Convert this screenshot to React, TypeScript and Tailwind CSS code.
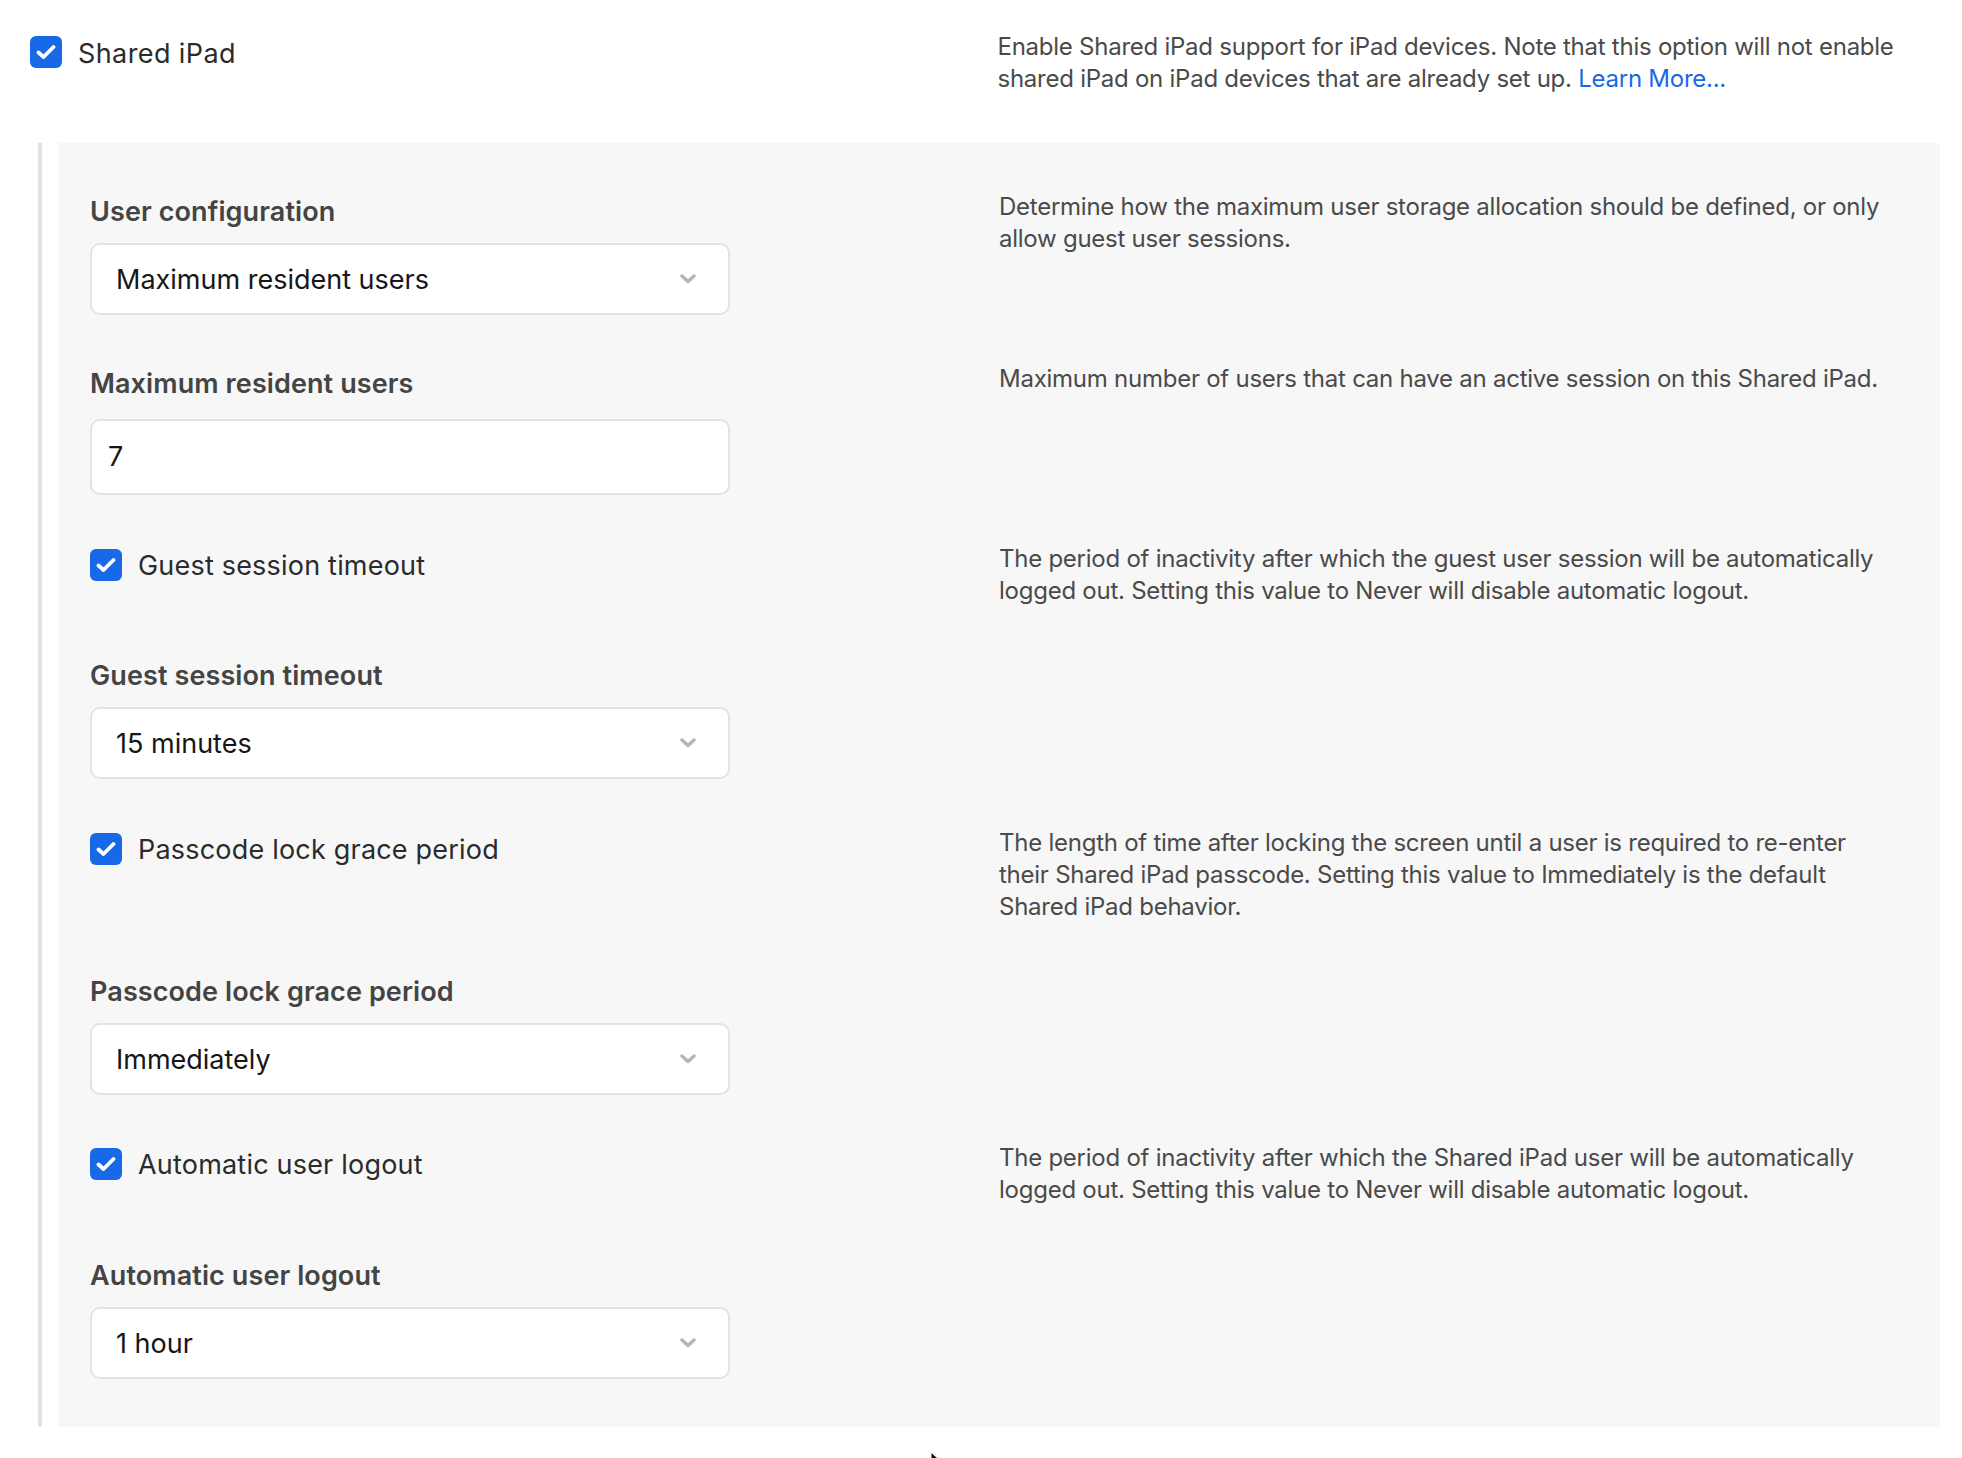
import type { ReactNode } from "react";

const font = "font-['Inter',sans-serif]";

function Checkbox() {
    return (
        <span className="flex h-8 w-8 shrink-0 items-center justify-center rounded-[6px] bg-[#1769e8]">
            <svg className="h-4 w-5" viewBox="0 0 20 16" fill="none">
                <path d="M2.5 8.5 L7.5 13 L17.5 3" stroke="#fff" strokeWidth="3.8" strokeLinecap="round" strokeLinejoin="round" />
            </svg>
        </span>
    );
}

function Chevron() {
    return (
        <svg className="h-[10px] w-4 shrink-0" viewBox="0 0 16 10" fill="none">
            <path d="M2 2 L8 7.5 L14 2" stroke="#b4b4b4" strokeWidth="3.4" strokeLinecap="round" strokeLinejoin="round" />
        </svg>
    );
}

function Desc({ children, className = "" }: { children?: ReactNode; className?: string }) {
    return <p className={`text-[24px] leading-[32px] tracking-[-0.25px] text-[#4a4a4a] ${className}`}>{children}</p>;
}

function Label({ children }: { children: ReactNode }) {
    return <div className="text-[27px] leading-[34px] font-semibold tracking-[0.1px] text-[#444444]">{children}</div>;
}

function SelectBox({ value }: { value: string }) {
    return (
        <div className="flex h-[72px] w-[640px] items-center justify-between rounded-[10px] border-2 border-[#e3e3e3] bg-white pr-[32px] pl-6">
            <span className="pt-[2px] text-[27px] text-[#161616]">{value}</span>
            <Chevron />
        </div>
    );
}

function CheckRow({ label, desc, className }: { label: string; desc: ReactNode; className: string }) {
    return (
        <div className={`grid grid-cols-[909px_1fr] ${className}`}>
            <div className="flex items-center gap-4 self-start pt-1.5">
                <Checkbox />
                <span className="pt-[2px] text-[27px] leading-[30px] tracking-[0.2px] text-[#2b2b2b]">{label}</span>
            </div>
            <Desc>{desc}</Desc>
        </div>
    );
}

function SelectField({ label, value, className }: { label: string; value: string; className: string }) {
    return (
        <div className={className}>
            <Label>{label}</Label>
            <div className="mt-[14px]">
                <SelectBox value={value} />
            </div>
        </div>
    );
}

export default function App() {
    return (
        <div className={`relative h-[1458px] w-full overflow-hidden bg-white ${font}`}>
            <div className="flex pt-[31px] pr-[44px] pl-[30px]">
                <div className="flex w-[967.5px] shrink-0 items-center gap-4 self-start pt-[5px]">
                    <Checkbox />
                    <span className="pt-[3px] text-[27px] leading-[29px] tracking-[0.4px] text-[#2b2b2b]">Shared iPad</span>
                </div>
                <Desc>
                    Enable Shared iPad support for iPad devices. Note that this option will not enable shared iPad on iPad devices that are already set up.{" "}
                    <span className="text-[#1769e8]">Learn More...</span>
                </Desc>
            </div>

            <div className="mt-[48px] mr-[22px] ml-[38px] flex h-[1284px]">
                <div className="w-1 shrink-0 bg-[#e3e3e3]" />
                <div className="ml-4 flex-1 bg-[#f7f7f7] pt-12 pr-[40px] pl-8">
                    <div className="grid grid-cols-[909px_1fr]">
                        <div className="pt-1">
                            <Label>User configuration</Label>
                            <div className="mt-[14px]">
                                <SelectBox value="Maximum resident users" />
                            </div>
                        </div>
                        <Desc>Determine how the maximum user storage allocation should be defined, or only allow guest user sessions.</Desc>
                    </div>

                    <div className="mt-[48px] grid grid-cols-[909px_1fr]">
                        <div className="pt-1">
                            <Label>Maximum resident users</Label>
                            <div className="mt-[18px] flex h-[76px] w-[640px] items-center rounded-[10px] border-2 border-[#e3e3e3] bg-white pl-4 text-[27px] text-[#161616]">
                                7
                            </div>
                        </div>
                        <Desc>Maximum number of users that can have an active session on this Shared iPad.</Desc>
                    </div>

                    <CheckRow
                        className="mt-[48px]"
                        label="Guest session timeout"
                        desc="The period of inactivity after which the guest user session will be automatically logged out. Setting this value to Never will disable automatic logout."
                    />
                    <SelectField className="mt-[52px]" label="Guest session timeout" value="15 minutes" />

                    <CheckRow
                        className="mt-[48px]"
                        label="Passcode lock grace period"
                        desc="The length of time after locking the screen until a user is required to re-enter their Shared iPad passcode. Setting this value to Immediately is the default Shared iPad behavior."
                    />
                    <SelectField className="mt-[52px]" label="Passcode lock grace period" value="Immediately" />

                    <CheckRow
                        className="mt-[47px]"
                        label="Automatic user logout"
                        desc="The period of inactivity after which the Shared iPad user will be automatically logged out. Setting this value to Never will disable automatic logout."
                    />
                    <SelectField className="mt-[53px]" label="Automatic user logout" value="1 hour" />
                </div>
            </div>

            <svg className="absolute top-[1452px] left-[930px] h-6 w-5" viewBox="0 0 20 24">
                <path d="M1 0 L1 18 L6 14 L10 22 L13 20 L9 13 L15 13 Z" fill="#111" stroke="#fff" strokeWidth="1" />
            </svg>
        </div>
    );
}
